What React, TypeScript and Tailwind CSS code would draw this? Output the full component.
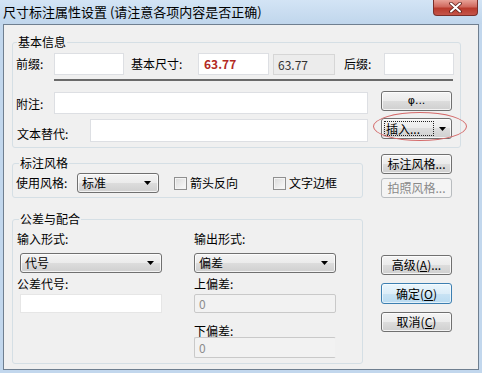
import React from 'react';

const btnBase =
  'flex items-center justify-center w-[71px] rounded-[3px] border text-[12px] leading-[14px]';
const btnNormal =
  'border-[#707070] bg-[linear-gradient(#f4f4f4,#ebebeb_50%,#dddddd_50%,#cfcfcf)] shadow-[inset_0_0_0_1px_rgba(255,255,255,0.75)] text-black';

function Btn({ children, h = 'h-[20px]', kind = 'normal', className = '' }: { children: React.ReactNode; h?: string; kind?: 'normal' | 'default' | 'disabled'; className?: string }) {
  const look =
    kind === 'default'
      ? 'border-[#3c7fb1] bg-[linear-gradient(#eaf6fd,#dcedf8_50%,#c9e3f4_50%,#b9dbf1)] shadow-[inset_0_0_0_1px_rgba(255,255,255,0.6)] text-black'
      : kind === 'disabled'
        ? 'border-[#b8bcbf] bg-[#f4f4f4] text-[#8a8a8a]'
        : btnNormal;
  return <div className={`${btnBase} ${h} ${look} ${className}`}>{children}</div>;
}

function Arrow() {
  return (
    <svg width="7" height="4" viewBox="0 0 7 4">
      <path d="M0 0h7L3.5 4z" fill="#000" />
    </svg>
  );
}

function Select({ value, w }: { value: string; w: string }) {
  return (
    <div className={`${w} h-[20px] flex items-center justify-between pl-[4px] pr-[7px] rounded-[3px] border border-[#707070] bg-[linear-gradient(#f4f4f4,#ebebeb_50%,#dddddd_50%,#cfcfcf)] shadow-[inset_0_0_0_1px_rgba(255,255,255,0.75)] text-[12px] leading-[14px]`}>
      <span>{value}</span>
      <Arrow />
    </div>
  );
}

function Check({ label, className = '' }: { label: string; className?: string }) {
  return (
    <div className={`flex items-center ${className}`}>
      <div className="w-[13px] h-[13px] border border-[#8f8f8f] bg-linear-to-br from-[#dadada] to-[#fbfbfb] shadow-[inset_0_0_0_1px_#f4f4f4]" />
      <span className="ml-[3px] text-[12px] leading-[14px]">{label}</span>
    </div>
  );
}

const input = 'bg-white border border-[#dddfe3]';
const disabledInput =
  'bg-[#f2f2f2] border border-[#c9c9c9] rounded-[2px] pl-[4px] flex items-center text-[12px] leading-[14px] text-[#8c8c8c]';

export default function App() {
  return (
    <div className="relative w-[482px] h-[373px] overflow-hidden bg-[#c2d7ed] text-black font-['Noto_Sans_CJK_SC','Noto_Sans',sans-serif]">
      {/* title bar */}
      <div className="h-[24px] flex items-start bg-linear-to-b from-[#d3e4f5] to-[#c0d6ec]">
        <div className="pl-[3px] pt-[4px] text-[13px] leading-[16px] text-black">
          尺寸标注属性设置 (请注意各项内容是否正确)
        </div>
        <div className="ml-auto mr-[4px] w-[45px] h-[16px] flex items-center justify-center rounded-b-[4px] border border-t-0 border-[#7a2f2a] bg-[linear-gradient(#e8a197,#d0695e_45%,#b93a2c_55%,#c4554a)]">
          <svg width="13" height="11" viewBox="0 0 13 11">
            <path d="M2 1.5L11 9.5M11 1.5L2 9.5" stroke="#5a1e18" strokeWidth="3.6" strokeLinecap="round" />
            <path d="M2 1.5L11 9.5M11 1.5L2 9.5" stroke="#fff" strokeWidth="2" strokeLinecap="round" />
          </svg>
        </div>
      </div>

      {/* client area */}
      <div className="ml-[3px] w-[476px] h-[346px] border border-[#6f7f90] bg-[#f0f0f0] pl-[8px] pt-[10px] text-[12px] leading-[14px]">
        {/* 基本信息 */}
        <fieldset className="w-[449px] border border-[#d5dfe5] rounded-[3px] pb-[5px]">
          <legend className="ml-[4px] px-[1px] h-[14px] leading-[14px]">基本信息</legend>
          <div className="mt-[4px] flex items-center h-[22px]">
            <div className="w-[41px] pl-[3px]">前缀:</div>
            <div className={`${input} w-[70px] h-[22px]`} />
            <div className="ml-[7px] w-[67px]">基本尺寸:</div>
            <div className={`${input} w-[71px] h-[22px] flex items-center pl-[5px] font-bold text-[#b22a24]`}>63.77</div>
            <div className="ml-[4px] w-[62px] h-[21px] bg-[#ececec] border border-[#d6d6d6] pl-[4px] pt-[3px] text-[#333]">63.77</div>
            <div className="ml-[9px] w-[40px]">后缀:</div>
            <div className={`${input} w-[70px] h-[22px]`} />
          </div>
          <div className="ml-[41px] mt-[4px] w-[399px] h-[2px] bg-[#6a6a6a]" />
          <div className="mt-[10px] flex items-start">
            <div className="w-[41px] pl-[3px] mt-[6px]">附注:</div>
            <div className={`${input} w-[314px] h-[22px] mt-[1px]`} />
            <Btn className="ml-[13px]">
              <span className="font-['DejaVu_Sans',sans-serif] text-[11px]">φ...</span>
            </Btn>
          </div>
          <div className="mt-[4px] flex items-start">
            <div className="w-[77px] pl-[4px] mt-[9px]">文本替代:</div>
            <div className={`${input} w-[278px] h-[23px] mt-[1px]`} />
            <Btn h="h-[21px]" className="ml-[13px] !justify-between pl-[2px] pr-[5px]">
              <span className="h-[15px] px-[1px] leading-[14px] border border-dotted border-[#222] w-[50px]">插入...</span>
              <Arrow />
            </Btn>
          </div>
        </fieldset>

        <div className="flex">
          <div className="w-[351px]">
            {/* 标注风格 */}
            <fieldset className="mt-[8px] border border-[#d5dfe5] rounded-[3px] pb-[4px]">
              <legend className="ml-[6px] px-[1px] h-[14px] leading-[14px]">标注风格</legend>
              <div className="mt-[3px] h-[20px] flex items-center">
                <div className="w-[64px] pl-[3px]">使用风格:</div>
                <Select value="标准" w="w-[82px]" />
                <Check label="箭头反向" className="ml-[15px] w-[99px]" />
                <Check label="文字边框" />
              </div>
            </fieldset>

            {/* 公差与配合 */}
            <fieldset className="mt-[14px] border border-[#d5dfe5] rounded-[3px] pb-[5px]">
              <legend className="ml-[6px] px-[1px] h-[14px] leading-[14px]">公差与配合</legend>
              <div className="flex">
                <div className="w-[181px]">
                  <div className="mt-[6px] h-[14px] pl-[4px]">输入形式:</div>
                  <div className="mt-[7px] ml-[7px]">
                    <Select value="代号" w="w-[142px]" />
                  </div>
                  <div className="mt-[4px] h-[14px] pl-[4px]">公差代号:</div>
                  <div className={`${input} mt-[3px] ml-[7px] w-[142px] h-[19px] border-[#e6e6e6]`} />
                </div>
                <div>
                  <div className="mt-[6px] h-[14px]">输出形式:</div>
                  <div className="mt-[7px]">
                    <Select value="偏差" w="w-[142px]" />
                  </div>
                  <div className="mt-[4px] h-[14px]">上偏差:</div>
                  <div className={`${disabledInput} mt-[3px] w-[142px] h-[19px]`}>0</div>
                  <div className="mt-[11px] h-[13px]">下偏差:</div>
                  <div className={`${disabledInput} w-[142px] h-[21px] border-r-[#f0f0f0]`}>0</div>
                </div>
              </div>
            </fieldset>
          </div>

          <div className="ml-[18px] w-[71px]">
            <Btn className="mt-[6px]">标注风格...</Btn>
            <Btn kind="disabled" className="mt-[4px]">拍照风格...</Btn>
            <Btn className="mt-[57px]">
              高级(<span className="underline">A</span>)...
            </Btn>
            <Btn kind="default" h="h-[21px]" className="mt-[8px]">
              确定(<span className="underline">O</span>)
            </Btn>
            <Btn className="mt-[8px]">
              取消(<span className="underline">C</span>)
            </Btn>
          </div>
        </div>
      </div>

      {/* red annotation ellipse */}
      <div className="absolute left-[373px] top-[112px] w-[94px] h-[29px] rounded-[50%] border border-[#d46a6a]" />
    </div>
  );
}
